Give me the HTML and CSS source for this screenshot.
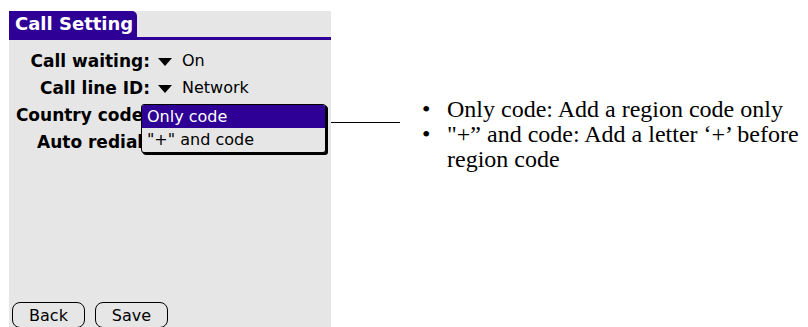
FILE: index.html
```html
<!DOCTYPE html>
<html lang="en">
<head>
<meta charset="utf-8">
<title>Call Setting</title>
<link rel="stylesheet" href="styles.css">
</head>
<body>
<div class="page">
  <section class="device">
    <header class="titlebar"><h1 class="tab">Call Setting</h1></header>
    <div class="form">
      <div class="row"><span class="label">Call waiting:</span><span class="arrow"></span><span class="value">On</span></div>
      <div class="row"><span class="label">Call line ID:</span><span class="arrow"></span><span class="value">Network</span></div>
      <div class="row"><span class="label">Country code:</span><span class="arrow"></span><span class="value"></span></div>
      <div class="row"><span class="label">Auto redial:</span><span class="arrow"></span><span class="value"></span></div>
    </div>
    <div class="popup">
      <div class="option selected">Only code</div>
      <div class="option">"+" and code</div>
    </div>
    <footer class="buttons">
      <button class="btn">Back</button>
      <button class="btn">Save</button>
    </footer>
  </section>
  <div class="connector"></div>
  <ul class="notes">
    <li><span class="bullet">•</span><span>Only code: Add a region code only</span></li>
    <li><span class="bullet">•</span><span>"+” and code: Add a letter ‘+’ before region code</span></li>
  </ul>
</div>
</body>
</html>
```

FILE: styles.css
```css
html, body {
  margin: 0;
  padding: 0;
  background: #ffffff;
}

.page {
  display: flex;
  align-items: flex-start;
  width: 808px;
  height: 327px;
  overflow: hidden;
}

.device {
  position: relative;
  flex: 0 0 auto;
  margin: 11px 0 0 9px;
  width: 322px;
  height: 316px;
  background: #e6e6e6;
  display: flex;
  flex-direction: column;
  font-family: "DejaVu Sans", sans-serif;
  color: #000;
}

.titlebar {
  height: 26px;
  border-bottom: 3px solid #2e0096;
  display: flex;
}

.tab {
  margin: 0;
  width: 122px;
  padding-left: 6px;
  background: #2e0096;
  color: #fff;
  font-size: 18px;
  font-weight: bold;
  line-height: 26px;
  border-top-right-radius: 5px;
  white-space: nowrap;
}

.form {
  padding-top: 7px;
  display: flex;
  flex-direction: column;
}

.row {
  display: grid;
  grid-template-columns: 141px 14px auto;
  column-gap: 8px;
  align-items: center;
  height: 27px;
}

.label {
  text-align: right;
  font-weight: bold;
  font-size: 17px;
  white-space: nowrap;
}

.arrow {
  width: 0;
  height: 0;
  border-left: 7px solid transparent;
  border-right: 7px solid transparent;
  border-top: 8px solid #000;
  margin-top: 2px;
}

.value {
  font-size: 16px;
  padding-left: 2px;
  white-space: nowrap;
}

.popup {
  position: absolute;
  left: 132px;
  top: 93px;
  width: 183px;
  background: #e6e6e6;
  border: 1px solid #000;
  border-radius: 3px;
  box-shadow: 1px 1px 0 #000, 2px 2px 0 #000;
  overflow: hidden;
  font-size: 16px;
}

.option {
  height: 23px;
  line-height: 23px;
  padding-left: 5px;
  white-space: nowrap;
}

.option + .option {
  height: 24px;
  line-height: 24px;
}

.option.selected {
  background: #2e0096;
  color: #fff;
}

.buttons {
  margin-top: auto;
  display: flex;
  gap: 10px;
  padding-left: 3px;
}

.btn {
  box-sizing: border-box;
  width: 73px;
  height: 26px;
  margin: 0;
  padding: 0;
  background: transparent;
  border: 1.5px solid #000;
  border-radius: 8px;
  font-family: "DejaVu Sans", sans-serif;
  font-size: 16px;
  color: #000;
  margin-bottom: -1px;
}

.connector {
  flex: 0 0 auto;
  width: 69px;
  margin-top: 122px;
  border-top: 1px solid #000;
}

.notes {
  list-style: none;
  margin: 97px 0 0 22px;
  padding: 0;
  width: 386px;
  font-family: "Liberation Serif", serif;
  font-size: 24px;
  line-height: 25px;
  color: #000;
}

.notes li {
  display: grid;
  grid-template-columns: 25px 1fr;
}
```
